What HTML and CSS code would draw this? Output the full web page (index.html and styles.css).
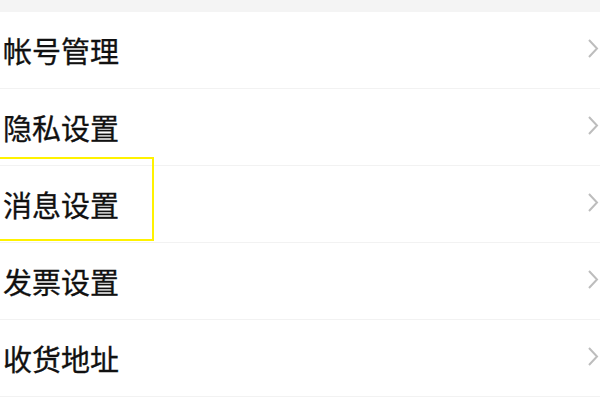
FILE: index.html
```html
<!DOCTYPE html>
<html lang="zh-CN">
<head>
<meta charset="utf-8">
<link rel="stylesheet" href="styles.css">
</head>
<body>
<div class="page">
  <div class="topband"></div>
  <ul class="list">
    <li class="row"><span class="label">帐号管理</span><svg class="chev" width="12" height="20" viewBox="0 0 12 20"><polyline points="2,1 10,9.5 2,18" /></svg></li>
    <li class="row"><span class="label">隐私设置</span><svg class="chev" width="12" height="20" viewBox="0 0 12 20"><polyline points="2,1 10,9.5 2,18" /></svg></li>
    <li class="row highlighted"><span class="label">消息设置</span><svg class="chev" width="12" height="20" viewBox="0 0 12 20"><polyline points="2,1 10,9.5 2,18" /></svg><div class="mark"></div></li>
    <li class="row"><span class="label">发票设置</span><svg class="chev" width="12" height="20" viewBox="0 0 12 20"><polyline points="2,1 10,9.5 2,18" /></svg></li>
    <li class="row"><span class="label">收货地址</span><svg class="chev" width="12" height="20" viewBox="0 0 12 20"><polyline points="2,1 10,9.5 2,18" /></svg></li>
  </ul>
</div>
</body>
</html>
```
FILE: styles.css
```css
html, body {
  margin: 0;
  padding: 0;
  background: #ffffff;
}
.page {
  width: 600px;
  height: 400px;
  overflow: hidden;
  font-family: "Noto Sans CJK SC", "Noto Sans", sans-serif;
}
.topband {
  height: 12px;
  background: #f4f4f4;
}
.list {
  list-style: none;
  margin: 0;
  padding: 0;
}
.row {
  position: relative;
  height: 76px;
  border-bottom: 1px solid #f2f2f2;
  display: flex;
  align-items: center;
  justify-content: space-between;
  padding: 0 1px 0 3px;
}
.label {
  font-size: 29px;
  font-weight: 400;
  color: #111111;
  line-height: 1;
  -webkit-text-stroke: 0.3px #111111;
}
.chev {
  margin-top: -3px;
}
.chev polyline {
  fill: none;
  stroke: #bdbdbd;
  stroke-width: 2;
}
.mark {
  position: absolute;
  left: -4px;
  top: -9px;
  width: 154px;
  height: 80px;
  border: 2px solid #fff200;
}
```
